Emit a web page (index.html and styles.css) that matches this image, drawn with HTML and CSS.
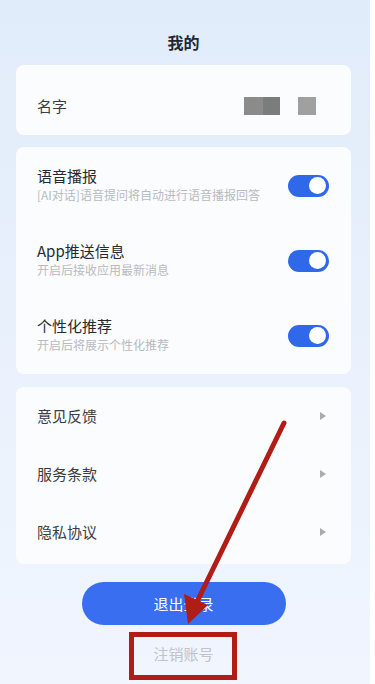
FILE: index.html
```html
<!DOCTYPE html>
<html lang="zh-CN">
<head>
<meta charset="utf-8">
<title>我的</title>
<link rel="stylesheet" href="styles.css">
</head>
<body>
<div class="app">
  <header class="title">我的</header>

  <section class="card card-name">
    <div class="name-row">
      <span class="label">名字</span>
      <span class="mask">
        <span class="blk blk-a"></span><span class="blk blk-b"></span>
        <span class="blk blk-c"></span>
      </span>
    </div>
  </section>

  <section class="card card-switch">
    <div class="sw-row">
      <div class="sw-text">
        <div class="sw-title">语音播报</div>
        <div class="sw-sub">[AI对话]语音提问将自动进行语音播报回答</div>
      </div>
      <span class="toggle"><span class="knob"></span></span>
    </div>
    <div class="sw-row">
      <div class="sw-text">
        <div class="sw-title">App推送信息</div>
        <div class="sw-sub">开启后接收应用最新消息</div>
      </div>
      <span class="toggle"><span class="knob"></span></span>
    </div>
    <div class="sw-row">
      <div class="sw-text">
        <div class="sw-title">个性化推荐</div>
        <div class="sw-sub">开启后将展示个性化推荐</div>
      </div>
      <span class="toggle"><span class="knob"></span></span>
    </div>
  </section>

  <section class="card card-links">
    <div class="link-row"><span class="label">意见反馈</span><span class="tri"></span></div>
    <div class="link-row"><span class="label">服务条款</span><span class="tri"></span></div>
    <div class="link-row"><span class="label">隐私协议</span><span class="tri"></span></div>
  </section>

  <div class="actions">
    <button class="logout">退出登录</button>
    <div class="cancel">注销账号</div>
  </div>

  <svg class="annot" width="370" height="684" viewBox="0 0 370 684">
    <line x1="284" y1="423" x2="193" y2="610" stroke="#b01c16" stroke-width="5" stroke-linecap="round"/>
    <polygon points="188,624 184,594 208,605" fill="#b01c16"/>
    <rect x="131.5" y="634.5" width="103" height="43" fill="none" stroke="#b01c16" stroke-width="5"/>
  </svg>
</div>
</body>
</html>
```
FILE: styles.css
```css
html, body {
  margin: 0;
  padding: 0;
  background: #ffffff;
}
body {
  font-family: "Noto Sans CJK SC", "Noto Sans", sans-serif;
  width: 375px;
  height: 684px;
  overflow: hidden;
}
.app {
  position: relative;
  width: 370px;
  height: 684px;
  background: linear-gradient(180deg, #e1ecfa 0%, #e6effb 35%, #edf3fd 70%, #f0f5fe 100%);
  display: flex;
  flex-direction: column;
  padding: 0 19px 0 16px;
  box-sizing: border-box;
}
.title {
  height: 65px;
  display: flex;
  align-items: center;
  justify-content: center;
  padding-top: 18px;
  box-sizing: border-box;
  font-size: 16px;
  font-weight: 700;
  color: #1e2733;
  line-height: 20px;
}
.card {
  background: #fbfcfe;
  border-radius: 8px;
}
.card-name {
  height: 70px;
  display: flex;
  align-items: center;
  padding: 0 35px 0 21px;
}
.name-row {
  flex: 1;
  display: flex;
  align-items: center;
  justify-content: space-between;
  margin-top: 12px;
}
.label {
  font-size: 15px;
  color: #3a3d42;
  line-height: 20px;
}
.mask {
  display: flex;
  align-items: center;
}
.blk {
  display: block;
  height: 18px;
}
.blk-a { width: 19px; background: #8b8b8b; }
.blk-b { width: 17px; background: #7b7c7c; }
.blk-c { width: 18px; background: #a0a0a0; margin-left: 18px; }

.card-switch {
  margin-top: 12px;
  padding: 1px 0;
}
.sw-row {
  height: 75px;
  display: flex;
  align-items: center;
  justify-content: space-between;
  padding: 0 22px 0 21px;
}
.sw-text {
  display: flex;
  flex-direction: column;
  margin-top: -2px;
}
.sw-title {
  font-size: 15px;
  line-height: 20px;
  color: #262a30;
}
.sw-sub {
  font-size: 12px;
  line-height: 16px;
  color: #b7babf;
  margin-top: 1px;
}
.toggle {
  width: 41px;
  height: 22px;
  border-radius: 11px;
  background: #2f69ea;
  display: flex;
  align-items: center;
  justify-content: flex-end;
  padding: 0 3px;
  box-sizing: border-box;
}
.knob {
  width: 17px;
  height: 17px;
  border-radius: 50%;
  background: #ffffff;
}
.card-links {
  margin-top: 13px;
  padding: 0 0 3px;
}
.link-row {
  height: 58px;
  display: flex;
  align-items: center;
  justify-content: space-between;
  padding: 0 25px 0 21px;
}
.tri {
  width: 0;
  height: 0;
  border-top: 4px solid transparent;
  border-bottom: 4px solid transparent;
  border-left: 6px solid #a9abae;
}
.actions {
  display: flex;
  flex-direction: column;
  align-items: center;
  padding-top: 18px;
}
.logout {
  width: 204px;
  height: 43px;
  border: 0;
  border-radius: 22px;
  background: #3a6ef1;
  color: #ffffff;
  font-family: inherit;
  font-size: 15px;
  line-height: 20px;
  padding: 0;
}
.cancel {
  margin-top: 19px;
  font-size: 15px;
  line-height: 20px;
  color: #bfc3ca;
}
.annot {
  position: absolute;
  left: 0;
  top: 0;
  pointer-events: none;
}
```
